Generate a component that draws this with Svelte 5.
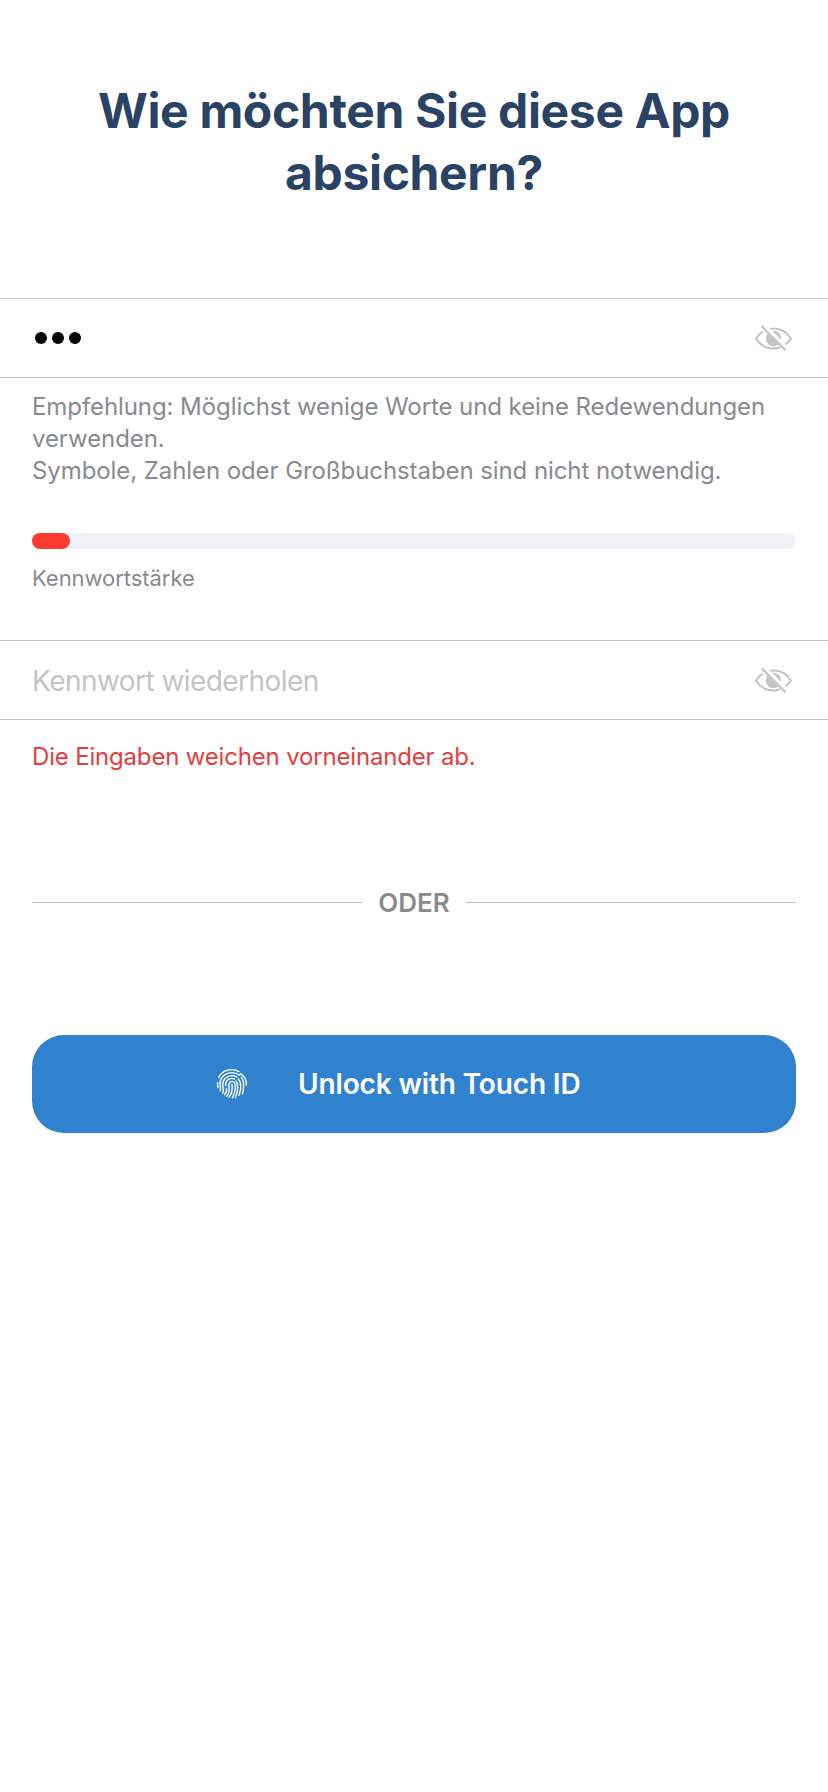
<script>
  const strength = 5;
</script>

{#snippet hiddenEye()}
  <svg class="eye" viewBox="0 0 40 28" width="40" height="28" aria-hidden="true">
    <path d="M8.800 7.700C6 9.400 3.800 11.700 2 14.500c3.800 5.900 10.200 10 17.500 10 2.400 0 4.700-.4 6.800-1.200M14 5.400C15.800 4.800 17.600 4.500 19.500 4.500c7.300 0 13.700 4 17.500 10-1.700 2.700-4 5-6.700 6.700" fill="none" stroke="currentColor" stroke-width="2" />
    <circle cx="19.500" cy="14.500" r="7.700" fill="currentColor" />
    <path d="M9.200 1.700 33.200 25.500" stroke="#fff" stroke-width="5.200" />
    <path d="M7.700 2.300 31.600 26.200" stroke="currentColor" stroke-width="2.200" />
  </svg>
{/snippet}

<main>
  <h1>Wie möchten Sie diese App<br />absichern?</h1>

  <div class="field">
    <div class="dots"><i></i><i></i><i></i></div>
    {@render hiddenEye()}
  </div>
  <p class="hint">
    Empfehlung: Möglichst wenige Worte und keine Redewendungen<br />verwenden.<br />
    Symbole, Zahlen oder Großbuchstaben sind nicht notwendig.
  </p>

  <div class="meter"><div class="level" style="width: {strength}%"></div></div>
  <p class="caption">Kennwortstärke</p>

  <div class="field">
    <span class="placeholder">Kennwort wiederholen</span>
    {@render hiddenEye()}
  </div>
  <p class="error">Die Eingaben weichen vorneinander ab.</p>

  <div class="divider"><span>ODER</span></div>

  <button>
    <svg class="finger" viewBox="48 54 96 96" width="32" height="32" aria-hidden="true">
      <g fill="none" stroke="currentColor" stroke-width="4.200" stroke-linecap="round">
        <path d="M56 83C63 68 78 59 95 59c8 0 15 2 22 6" />
        <path d="M122 71c12 9 18 20 17 34" />
        <path d="M53 98c-1 6-1 10 1 15" />
        <path d="M61 122c2-7-1-12-1-20 0-18 15-34 36-34 9 0 17 3 23 8" />
        <path d="M124 82c8 10 8 23 6 36-.5 6-1 10-3 14" />
        <path d="M68 129c5-7 0-16 0-25 0-15 12-27 28-27 5 0 10 1 14 4" />
        <path d="M115 87c9 10 9 29 2 49" />
        <path d="M74 134c6-7 7-12 5-19M77 107c-2-12 7-22 19-22 3 0 6 1 8 2" />
        <path d="M108 93c7 9 7 29-2 50" />
        <path d="M80 139c7-7 8-14 7-23-1-13 0-22 9-22 8 0 10 8 10 19-1 13-5 24-9 31" />
        <path d="M96 103c2 15-1 29-9 39" />
      </g>
    </svg>
    <span>Unlock with Touch ID</span>
  </button>
</main>

<style>
  :global(body) { background: #fff; }
  main {
    box-sizing: border-box;
    width: 828px;
    height: 1792px;
    padding-top: 80px;
    display: flex;
    flex-direction: column;
    overflow: hidden;
    background: #fff;
    font-family: Inter, "Liberation Sans", sans-serif;
    color: #8a8a8e;
  }
  h1 {
    margin: 0 0 94px;
    text-align: center;
    font-size: 48px;
    line-height: 62px;
    font-weight: 700;
    letter-spacing: -0.34px;
    color: #2a4365;
  }
  p { margin: 0; padding: 0 32px; white-space: nowrap; }
  .field {
    box-sizing: border-box;
    height: 80px;
    flex: none;
    padding: 0 34px 0 32px;
    display: flex;
    align-items: center;
    justify-content: space-between;
    border-top: 1px solid #c4c4c6;
    border-bottom: 1px solid #c4c4c6;
  }
  .dots { display: flex; gap: 5px; padding-left: 3px; }
  .dots i { width: 12px; height: 12px; border-radius: 50%; background: #000; }
  .eye { color: #c4c4c6; }
  .hint { margin-top: 13px; font-size: 24px; line-height: 32px; letter-spacing: -0.08px; }
  .meter {
    flex: none;
    height: 16px;
    margin: 46px 32px 0;
    border-radius: 8px;
    background: #f2f1f7;
  }
  .level { height: 100%; border-radius: 8px; background: #ff3b30; }
  .caption { margin-top: 14px; margin-bottom: 47px; font-size: 22px; line-height: 30px; letter-spacing: -0.05px; }
  .placeholder { padding-top: 1px; font-size: 28px; line-height: 36px; letter-spacing: -0.55px; color: #c4c4c6; }
  .error { margin-top: 21px; font-size: 24px; line-height: 32px; letter-spacing: -0.18px; color: #e53e3e; }
  .divider {
    margin: 113px 32px 0;
    display: flex;
    align-items: center;
    gap: 16px;
    font-size: 26px;
    line-height: 34px;
    font-weight: 600;
  }
  .divider::before, .divider::after { content: ""; flex: 1; height: 1px; margin-bottom: 2px; background: #c4c4c6; }
  button {
    flex: none;
    height: 98px;
    margin: 115px 32px 0;
    padding: 0 0 0 184px;
    display: flex;
    align-items: center;
    gap: 50px;
    border: 0;
    border-radius: 32px;
    background: #3182ce;
    color: #fff;
    font: 560 28px/36px Inter, "Liberation Sans", sans-serif;
    letter-spacing: -0.14px;
    white-space: nowrap;
  }
</style>
